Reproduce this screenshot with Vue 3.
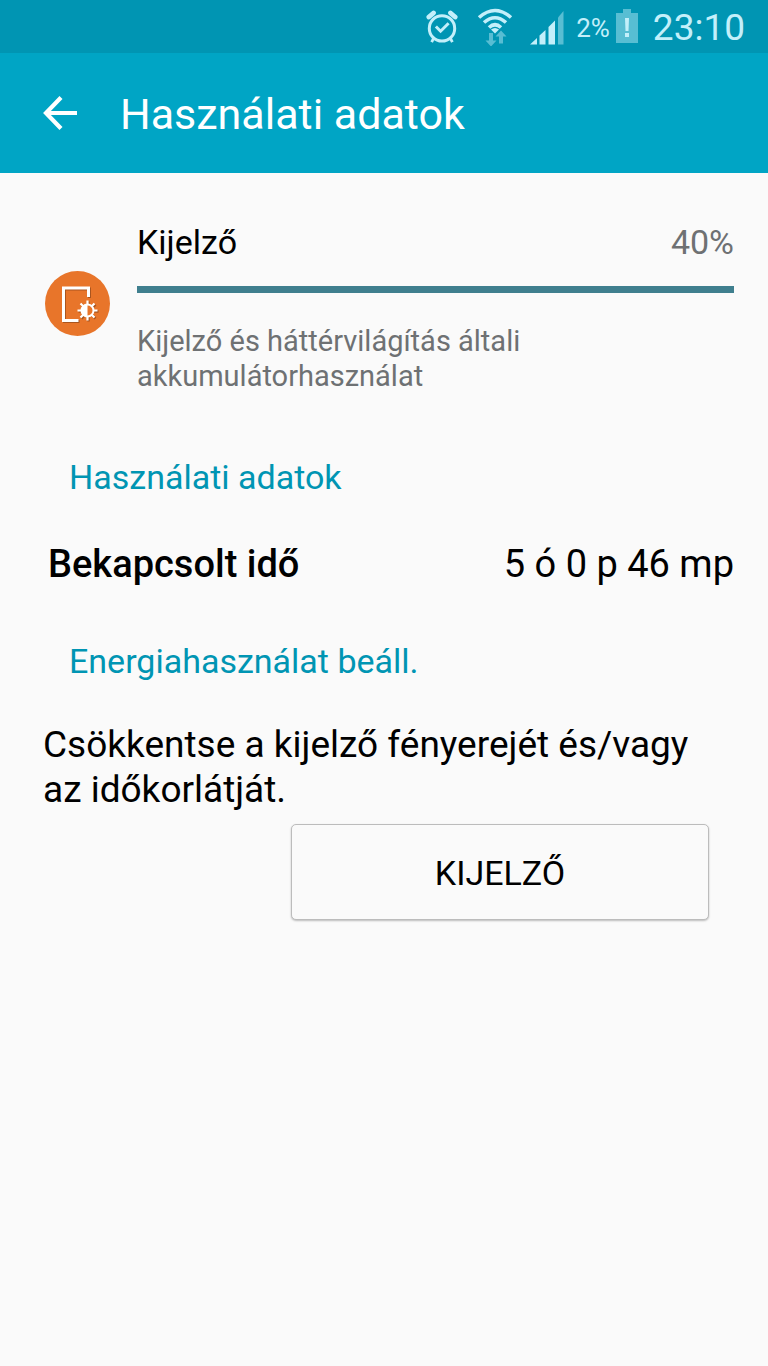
<script setup>
const battery = '2%'
const clock = '23:10'
const usage = {
  name: 'Kijelző',
  percent: '40%',
  description: 'Kijelző és háttérvilágítás általi akkumulátorhasználat'
}
</script>

<template>
  <div class="screen">
    <div class="status">
      <svg class="alarm" viewBox="0 0 34 36" aria-hidden="true">
        <circle cx="17" cy="19.500" r="13.500" fill="none" stroke="currentColor" stroke-width="3.200" />
        <path d="M10.500 17.500l5 5 8.500-8.500" fill="none" stroke="currentColor" stroke-width="3.200" />
        <path d="M3 7.500l5-4.500M31 7.500l-5-4.500" stroke="currentColor" stroke-width="5" stroke-linecap="round" />
        <path d="M8 30l-2 4M26 30l2 4" stroke="currentColor" stroke-width="3" />
      </svg>
      <svg class="wifi" viewBox="0 0 36 38" aria-hidden="true">
        <g fill="none" stroke="currentColor" stroke-width="3.600">
          <path d="M2 9.500Q18-4.500 34 9.500" />
          <path d="M7 14.500Q18 5 29 14.500" />
          <path d="M12 19.500Q18 14 24 19.500" />
        </g>
        <path d="M18 25.500l-4-4q4-3 8 0z" fill="currentColor" />
        <g class="dim" fill="currentColor">
          <path d="M12 25h4v7.500h3.500l-5.500 6-5.500-6h3.500z" />
          <path d="M22 35.500h4v-7h3.500l-5.500-6-5.500 6h3.500z" />
        </g>
      </svg>
      <svg class="signal" viewBox="0 0 34 36" aria-hidden="true">
        <g fill="currentColor">
          <path d="M0 34.500L7 28v6.500z" />
          <path d="M9.500 34.500v-9L15.500 20v14.500z" />
          <path d="M18.500 34.500V17L25 10.500v24z" />
          <path class="dim" d="M28 34.500V7.500L33.500 1v33.500z" />
        </g>
      </svg>
      <span class="battery-text">{{ battery }}</span>
      <svg class="battery" viewBox="0 0 22 34" aria-hidden="true">
        <path class="dim" d="M7 0h8v4h7v30H0V4h7z" fill="currentColor" />
        <path d="M9 9h4l-.5 13h-3zM9 24h4v4H9z" fill="currentColor" />
      </svg>
      <span class="clock">{{ clock }}</span>
    </div>

    <header class="bar">
      <button class="back" type="button" aria-label="Vissza">
        <svg viewBox="0 0 34 34" aria-hidden="true">
          <path d="M18 1.500L3 17l15 15.500M3 17h31" fill="none" stroke="currentColor" stroke-width="4.200" />
        </svg>
      </button>
      <h1>Használati adatok</h1>
    </header>

    <main>
      <section class="usage">
        <svg class="app-icon" viewBox="0 0 65 65" aria-hidden="true">
          <circle cx="32.500" cy="32.500" r="32.500" fill="#e8752a" />
          <g fill="none" stroke-width="3">
            <path d="M43.500 26V17H18.500V49.500H33.500" stroke="#a9551f" transform="translate(1 1)" />
            <path d="M43.500 26V17H18.500V49.500H33.500" stroke="#fff" />
          </g>
          <g transform="translate(42.500 39.500)">
            <path d="M0-10V10M-10 0H10M-7-7L7 7M7-7L-7 7" stroke="#a9551f" stroke-width="2.500" transform="translate(1 1)" />
            <path d="M0-10V10M-10 0H10M-7-7L7 7M7-7L-7 7" stroke="#fff" stroke-width="2.200" />
            <circle r="6" fill="#e8752a" stroke="#fff" stroke-width="2" />
            <path d="M0-6A6 6 0 0 0 0 6z" fill="#fff" />
          </g>
        </svg>
        <div class="usage-body">
          <div class="usage-head">
            <span>{{ usage.name }}</span>
            <span class="percent">{{ usage.percent }}</span>
          </div>
          <div class="meter"></div>
          <p class="description">{{ usage.description }}</p>
        </div>
      </section>

      <h2>Használati adatok</h2>
      <dl class="row">
        <dt>Bekapcsolt idő</dt>
        <dd>5 ó 0 p 46 mp</dd>
      </dl>

      <h2>Energiahasználat beáll.</h2>
      <p class="advice">Csökkentse a kijelző fényerejét és/vagy az időkorlátját.</p>
      <div class="actions">
        <button class="action" type="button">KIJELZŐ</button>
      </div>
    </main>
  </div>
</template>

<style>
body {
  background: #fafafa;
}
</style>

<style scoped>
.screen {
  min-height: 100vh;
  background: #fafafa;
  color: #000;
  font-family: Roboto, "Noto Sans", sans-serif;
}
h1, h2, p, dl, dd {
  margin: 0;
  font-weight: 400;
}
svg {
  display: block;
  flex: none;
}
.status {
  display: flex;
  align-items: center;
  justify-content: flex-end;
  height: 53px;
  padding: 2px 23px 0 0;
  box-sizing: border-box;
  background: #0095b3;
  color: #c3effa;
}
.dim {
  opacity: 0.45;
}
.alarm {
  width: 32px;
  height: 34px;
  margin: 0 19px 2px 0;
}
.wifi {
  width: 36px;
  height: 38px;
  margin: 0 17px 2px 0;
}
.signal {
  width: 34px;
  height: 36px;
  margin-right: 12px;
}
.battery-text {
  margin-right: 6px;
  font-size: 26px;
}
.battery {
  width: 22px;
  height: 34px;
  margin: 0 15px 4px 0;
}
.clock {
  font-size: 37px;
}
.bar {
  display: flex;
  align-items: center;
  height: 120px;
  padding: 0 43px;
  box-sizing: border-box;
  background: #00a5c5;
  color: #fff;
}
.back {
  margin: 0 43px 0 0;
  padding: 0;
  border: 0;
  background: none;
  color: inherit;
}
.back svg {
  width: 34px;
  height: 34px;
}
h1 {
  padding-top: 2px;
  font-size: 43px;
  line-height: 50px;
}
main {
  padding: 49px 34px 0 43px;
}
.usage {
  display: flex;
  align-items: flex-start;
}
.app-icon {
  width: 65px;
  height: 65px;
  margin: 49px 27px 0 2px;
}
.usage-body {
  flex: 1;
}
.usage-head {
  display: flex;
  justify-content: space-between;
  font-size: 34px;
  line-height: 40px;
}
.percent {
  color: #6e7173;
}
.meter {
  height: 7px;
  margin: 24px 0 31px;
  background: #3f7f8e;
}
.description {
  max-width: 420px;
  color: #6e7173;
  font-size: 29px;
  line-height: 35px;
}
h2 {
  padding-left: 26px;
  color: #0095b3;
  font-size: 34px;
  line-height: 40px;
}
.usage + h2 {
  margin-top: 63px;
}
.row {
  display: flex;
  justify-content: space-between;
  margin: 45px 0 54px;
  padding-left: 5px;
  font-size: 38px;
  line-height: 45px;
}
dt {
  font-weight: 500;
}
.advice {
  margin-top: 41px;
  font-size: 37px;
  line-height: 45px;
}
.actions {
  display: flex;
  justify-content: flex-end;
  padding: 12px 25px 0 0;
}
.action {
  width: 418px;
  height: 96px;
  padding-top: 2px;
  border: 1px solid #bcbcbc;
  border-radius: 5px;
  background: #fafafa;
  box-shadow: 0 1px 2px rgba(0, 0, 0, 0.25);
  color: #000;
  font-family: inherit;
  font-size: 34px;
}
</style>
